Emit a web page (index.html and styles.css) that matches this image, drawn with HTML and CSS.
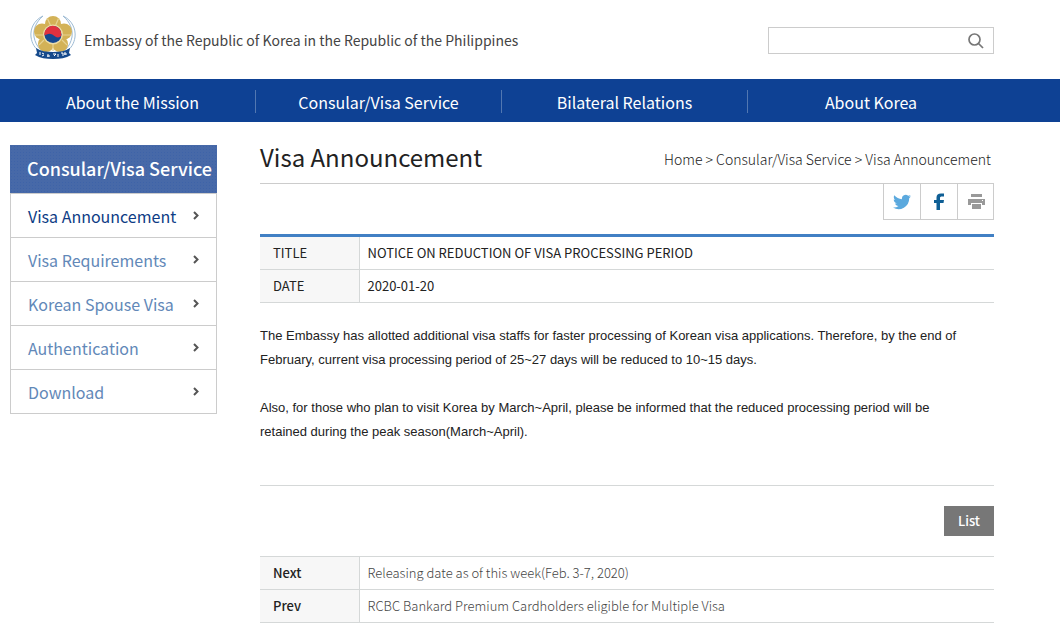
FILE: index.html
```html
<!DOCTYPE html>
<html lang="en">
<head>
<meta charset="utf-8">
<meta name="viewport" content="width=device-width, initial-scale=1">
<title>Visa Announcement</title>
<link rel="stylesheet" href="styles.css">
</head>
<body>
<header class="header wrap">
  <a class="brand" href="#">
    <svg class="emblem" viewBox="0 0 46 46" aria-hidden="true">
      <g fill="none" stroke="#9dbbd4" stroke-width="1">
        <path d="M13 2C4 6 0 15 1 23c1 7 4 11 8 14"/><path d="M13 2C6 8 3 15 4 23c1 5 3 9 6 12"/>
        <path d="M33 2c9 4 13 13 12 21-1 7-4 11-8 14"/><path d="M33 2c7 6 10 13 9 21-1 5-3 9-6 12"/>
      </g>
      <g fill="#d3b257">
        <circle cx="23" cy="10" r="8"/><circle cx="34" cy="17.500" r="8"/><circle cx="30" cy="30" r="8"/><circle cx="16" cy="30" r="8"/><circle cx="12" cy="17.500" r="8"/>
      </g>
      <path fill="none" stroke="#e6d292" stroke-width="1.200" d="M28.500 4.500l-3 7M17.500 4.500l3 7M41 21l-8 0M37 31l-5-5M23 37v-7M9 31l5-5M5 21h8"/>
      <circle cx="23" cy="20.500" r="10" fill="#ecdca6"/>
      <circle cx="23" cy="20.500" r="8.500" fill="#16488f"/>
      <path fill="#e0313f" d="M15.300 16.500a8.500 8.500 0 0 1 16 5c-3 4-6 1-9-1s-6 0-8 1c0-2 0-3 1-5z"/>
      <path fill="#164a8c" d="M6 34c5 3 10 4 17 4s12-1 17-4l-1 5 2 2c-5 3-11 4-18 4S10 44 5 41l2-2z"/>
      <path fill="none" stroke="#fff" stroke-width="1" d="M10 38v3M12 39l2 1m-2 2 2-1M18 40v3m-1-1h3M23 40h3l-2 2m4-2v3M31 39h2v3M35 38v3m-1-1h3"/>
    </svg>
    <span class="brand-name">Embassy of the Republic of Korea in the Republic of the Philippines</span>
  </a>
  <form class="search" role="search">
    <input class="search-input" type="text" aria-label="Search">
    <button class="search-button" type="button" aria-label="Submit search">
      <svg width="16" height="16" viewBox="0 0 16 16" fill="none" stroke="#777" aria-hidden="true"><circle cx="6.500" cy="6.500" r="5.500" stroke-width="1.700"/><path d="M10.500 10.500l4.500 4.500" stroke-width="1.700"/></svg>
    </button>
  </form>
</header>

<nav class="mainnav" aria-label="Main">
  <ul class="mainnav-list wrap">
    <li><a href="#">About the Mission</a></li>
    <li><a href="#">Consular/Visa Service</a></li>
    <li><a href="#">Bilateral Relations</a></li>
    <li><a href="#">About Korea</a></li>
  </ul>
</nav>

<div class="page wrap">
  <aside class="side">
    <h2 class="side-title">Consular/Visa Service</h2>
    <ul class="side-list">
      <li><a class="current" href="#">Visa Announcement<svg class="chevron" viewBox="0 0 6 9"><path d="M1 1l3.500 3.500L1 8"/></svg></a></li>
      <li><a href="#">Visa Requirements<svg class="chevron" viewBox="0 0 6 9"><path d="M1 1l3.500 3.500L1 8"/></svg></a></li>
      <li><a href="#">Korean Spouse Visa<svg class="chevron" viewBox="0 0 6 9"><path d="M1 1l3.500 3.500L1 8"/></svg></a></li>
      <li><a href="#">Authentication<svg class="chevron" viewBox="0 0 6 9"><path d="M1 1l3.500 3.500L1 8"/></svg></a></li>
      <li><a href="#">Download<svg class="chevron" viewBox="0 0 6 9"><path d="M1 1l3.500 3.500L1 8"/></svg></a></li>
    </ul>
  </aside>

  <main class="content">
    <div class="heading">
      <h1>Visa Announcement</h1>
      <p class="crumbs">Home &gt; Consular/Visa Service &gt; Visa Announcement</p>
    </div>
    <div class="share">
      <a href="#" aria-label="Twitter"><svg width="18" height="16" viewBox="0 0 18 16" aria-hidden="true"><path fill="#5ba9de" d="M18 2.300c-.7.300-1.300.5-2 .6.700-.5 1.300-1.200 1.600-2-.7.400-1.500.7-2.400.9A3.700 3.700 0 0 0 9 5.200C5.900 5 3.200 3.500 1.300 1.200.3 3 .8 5 2.400 6.100c-.6 0-1.200-.2-1.700-.5 0 1.800 1.300 3.300 3 3.700-.6.200-1.100.2-1.700.1.500 1.500 1.800 2.500 3.500 2.600A7.500 7.500 0 0 1 0 13.500 10.600 10.600 0 0 0 16.200 4.200c.7-.5 1.300-1.200 1.800-1.900z"/></svg></a>
      <a href="#" aria-label="Facebook"><svg width="10" height="18" viewBox="0 0 10 18" aria-hidden="true"><path fill="#0f5f95" d="M2.500 17V10H0V7h2.500V4.500C2.500 2 4 .5 7 .5h3v3H8c-1.500 0-2 .5-2 1.500v2h4l-.5 3H6v7z"/></svg></a>
      <button type="button" aria-label="Print"><svg width="17" height="16" viewBox="0 0 17 16" fill="#999" aria-hidden="true"><path d="M3 0h11v3H3zM0 5h17v6h-3V9H3v2H0zM4 10h9v5H4z"/><path fill="#fff" d="M14 6h1v1h-1z"/></svg></button>
    </div>

    <table class="info notice">
      <tbody>
        <tr><th scope="row">TITLE</th><td>NOTICE ON REDUCTION OF VISA PROCESSING PERIOD</td></tr>
        <tr><th scope="row">DATE</th><td>2020-01-20</td></tr>
      </tbody>
    </table>

    <article class="article">
      <p>The Embassy has allotted additional visa staffs for faster processing of Korean visa applications. Therefore, by the end of February, current visa processing period of 25~27 days will be reduced to 10~15 days.</p>
      <p>Also, for those who plan to visit Korea by March~April, please be informed that the reduced processing period will be retained during the peak season(March~April).</p>
    </article>

    <div class="actions"><a class="list-button" href="#">List</a></div>

    <table class="info pager">
      <tbody>
        <tr><th scope="row">Next</th><td><a href="#">Releasing date as of this week(Feb. 3-7, 2020)</a></td></tr>
        <tr><th scope="row">Prev</th><td><a href="#">RCBC Bankard Premium Cardholders eligible for Multiple Visa</a></td></tr>
      </tbody>
    </table>
  </main>
</div>
</body>
</html>
```

FILE: styles.css
```css
* { box-sizing: border-box; }

body {
  margin: 0;
  background: #fff;
  color: #222;
  font-family: "Noto Sans CJK KR", "Noto Sans", sans-serif;
  font-size: 13px;
}

a { color: inherit; text-decoration: none; }
ul { margin: 0; padding: 0; list-style: none; }
h1, h2, p { margin: 0; }
button { padding: 0; border: 0; background: none; cursor: pointer; }
svg { display: block; }

.wrap { padding-left: 10px; padding-right: 66px; }

.header {
  display: flex;
  align-items: center;
  justify-content: space-between;
  height: 79px;
}
.brand {
  display: flex;
  align-items: center;
  gap: 8px;
  padding-left: 20px;
  padding-bottom: 6px;
  color: #444;
}
.emblem { width: 46px; height: 46px; }
.brand-name { padding-top: 6px; font-size: 14px; line-height: 24px; }

.search {
  display: flex;
  width: 226px;
  height: 27px;
  margin-top: 2px;
  border: 1px solid #ccc;
}
.search-input { flex: 1; min-width: 0; border: 0; padding: 0 8px; outline: 0; }
.search-button { display: grid; place-items: center; width: 34px; }

.mainnav { background: #0e4194; }
.mainnav-list { display: grid; grid-template-columns: repeat(4, 1fr); }
.mainnav-list li { display: flex; align-items: center; }
.mainnav-list li:not(:last-child)::after { content: ""; width: 1px; height: 23px; margin-top: 2px; background: #5277b1; }
.mainnav-list a {
  flex: 1;
  padding: 11px 0 8px;
  color: #fff;
  font-size: 16px;
  line-height: 24px;
  text-align: center;
}

.page { display: flex; gap: 43px; padding-top: 23px; align-items: flex-start; }
.side { flex: 0 0 207px; }
.side-title {
  padding: 11px 0 13px 17px;
  background-color: #4769a8;
  background-image: radial-gradient(#3e63a8 1px, transparent 1px);
  background-size: 3px 3px;
  color: #fff;
  font-size: 18px;
  font-weight: 500;
  line-height: 24px;
  white-space: nowrap;
}
.side-list { border: 1px solid #ccc; }
.side-list li + li { border-top: 1px solid #ccc; }
.side-list a {
  display: flex;
  align-items: center;
  justify-content: space-between;
  padding: 10px 17px 9px;
  color: #6288b8;
  font-size: 16px;
  line-height: 24px;
}
.side-list .current { color: #0e3c85; }
.chevron { width: 6px; height: 9px; margin-bottom: 2px; fill: none; stroke: #555; stroke-width: 2; }

.content { flex: 1; min-width: 0; }
.heading {
  display: flex;
  align-items: flex-start;
  justify-content: space-between;
  height: 39px;
  padding-right: 3px;
  border-bottom: 1px solid #ccc;
}
.heading h1 { font-size: 24px; font-weight: 400; line-height: 24px; }
.crumbs { padding-top: 4px; color: #222; font-size: 14px; font-weight: 300; line-height: 20px; }

.share {
  display: grid;
  grid-template-columns: repeat(3, 37px);
  width: 111px;
  height: 36px;
  margin-left: auto;
  border: solid #ccc;
  border-width: 0 1px 1px 0;
}
.share > * { display: grid; place-items: center; border-left: 1px solid #ccc; }

.info { width: 100%; border-collapse: collapse; font-size: 13px; line-height: 20px; }
.info th, .info td { padding: 6px 8px; text-align: left; border-bottom: 1px solid #d5d8d8; }
.info th {
  width: 99px;
  padding-left: 13px;
  border-right: 1px solid #d5d8d8;
  background: #f7f7f7;
  font-weight: 500;
}
.notice { margin-top: 14px; border-top: 3px solid #4180c4; }
.notice th { font-weight: 400; }

.article {
  padding: 21px 24px 41px 0;
  border-bottom: 1px solid #d5d8d8;
  font-family: "Liberation Sans", Arial, sans-serif;
  font-size: 13px;
  line-height: 24px;
}
.article p + p { margin-top: 24px; }

.actions { display: flex; justify-content: flex-end; padding: 20px 0; }
.list-button {
  padding: 5px 14px;
  background: #777;
  color: #fff;
  font-size: 13px;
  font-weight: 500;
  line-height: 20px;
}
.pager { border-top: 1px solid #d5d8d8; }
.pager td { color: #444; font-weight: 300; }
```
